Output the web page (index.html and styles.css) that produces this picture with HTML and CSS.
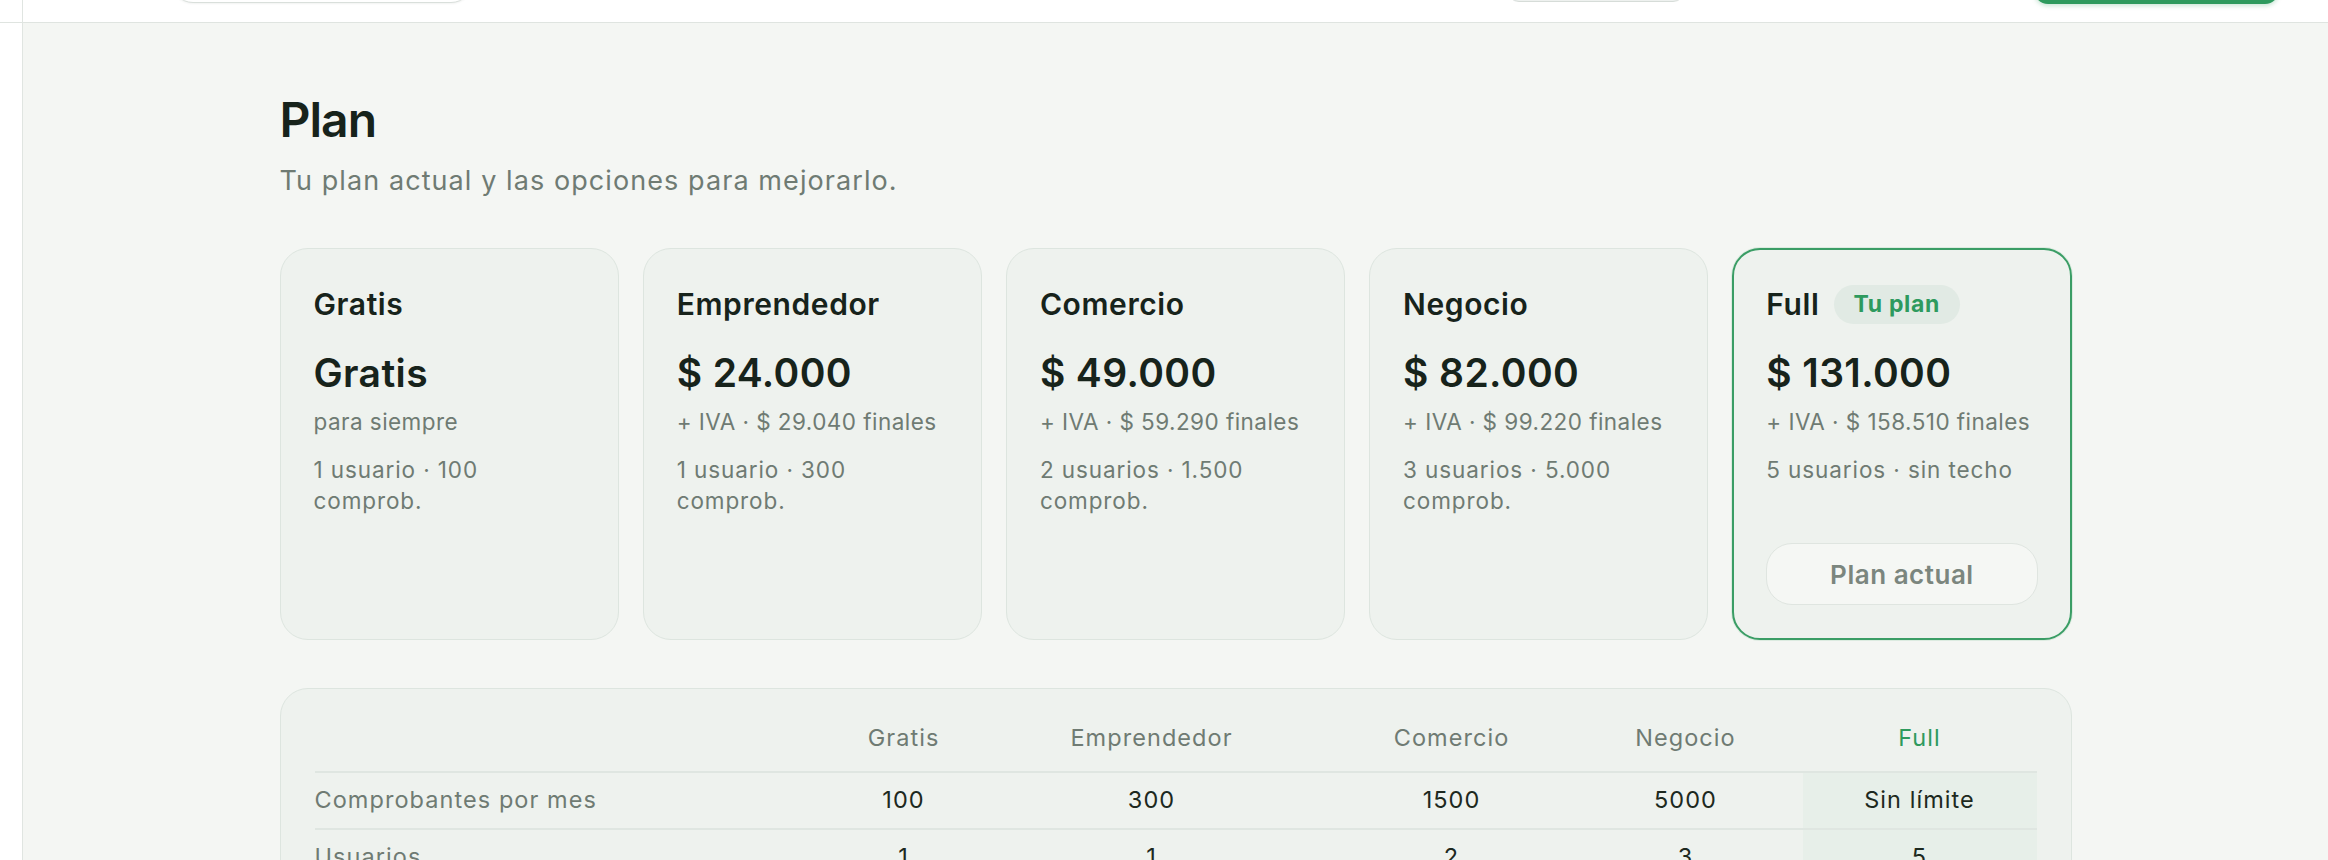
FILE: index.html
```html
<!DOCTYPE html>
<html lang="es">
<head>
<meta charset="utf-8">
<title>Plan</title>
<link rel="stylesheet" href="styles.css">
</head>
<body>
<div class="app">
  <aside class="sidebar"><div class="sidebar-top"></div></aside>
  <div class="main">
    <header class="topbar">
      <div class="search"></div>
      <div class="btn-ghost"></div>
      <div class="btn-primary"></div>
    </header>
    <main class="content">
      <div class="container">
        <h1 class="page-title">Plan</h1>
        <p class="subtitle">Tu plan actual y las opciones para mejorarlo.</p>

        <div class="plans">
          <section class="plan-card">
            <div class="plan-head"><h2 class="plan-name">Gratis</h2></div>
            <div class="plan-price">Gratis</div>
            <div class="plan-sub">para siempre</div>
            <div class="plan-feat">1 usuario · 100 comprob.</div>
          </section>
          <section class="plan-card">
            <div class="plan-head"><h2 class="plan-name">Emprendedor</h2></div>
            <div class="plan-price">$ 24.000</div>
            <div class="plan-sub">+ IVA · $ 29.040 finales</div>
            <div class="plan-feat">1 usuario · 300 comprob.</div>
          </section>
          <section class="plan-card">
            <div class="plan-head"><h2 class="plan-name">Comercio</h2></div>
            <div class="plan-price">$ 49.000</div>
            <div class="plan-sub">+ IVA · $ 59.290 finales</div>
            <div class="plan-feat">2 usuarios · 1.500 comprob.</div>
          </section>
          <section class="plan-card">
            <div class="plan-head"><h2 class="plan-name">Negocio</h2></div>
            <div class="plan-price">$ 82.000</div>
            <div class="plan-sub">+ IVA · $ 99.220 finales</div>
            <div class="plan-feat">3 usuarios · 5.000 comprob.</div>
          </section>
          <section class="plan-card is-current">
            <div class="plan-head"><h2 class="plan-name">Full</h2><span class="badge">Tu plan</span></div>
            <div class="plan-price">$ 131.000</div>
            <div class="plan-sub">+ IVA · $ 158.510 finales</div>
            <div class="plan-feat">5 usuarios · sin techo</div>
            <button class="plan-btn" type="button">Plan actual</button>
          </section>
        </div>

        <div class="compare">
          <table class="compare-table">
            <colgroup>
              <col class="c-label"><col class="c-gratis"><col class="c-empr"><col class="c-std"><col class="c-std"><col class="c-std">
            </colgroup>
            <thead>
              <tr>
                <th></th><th>Gratis</th><th>Emprendedor</th><th>Comercio</th><th>Negocio</th><th class="is-full">Full</th>
              </tr>
            </thead>
            <tbody>
              <tr>
                <td class="row-label">Comprobantes por mes</td><td>100</td><td>300</td><td>1500</td><td>5000</td><td class="is-full">Sin límite</td>
              </tr>
              <tr>
                <td class="row-label">Usuarios</td><td>1</td><td>1</td><td>2</td><td>3</td><td class="is-full">5</td>
              </tr>
            </tbody>
          </table>
        </div>
      </div>
    </main>
  </div>
</div>
</body>
</html>
```

FILE: styles.css
```css
* { box-sizing: border-box; }

html, body {
  margin: 0;
  padding: 0;
  background: #f4f6f3;
  font-family: "Inter", "Liberation Sans", sans-serif;
  color: #18241c;
  overflow: hidden;
}

.app {
  display: flex;
  min-height: 860px;
}

.sidebar {
  width: 23px;
  flex: none;
  background: #ffffff;
  border-right: 1px solid #e0e5e1;
}

.sidebar-top {
  height: 23px;
  border-bottom: 1px solid #dfe4e0;
}

.main {
  flex: 1;
  min-width: 0;
}

.topbar {
  height: 23px;
  background: #ffffff;
  border-bottom: 1px solid #dfe4e0;
  display: flex;
  align-items: flex-end;
  padding: 0 49px 19px 148px;
}

.search {
  width: 302px;
  height: 44px;
  flex: none;
  border: 1.5px solid #d9dfdb;
  border-radius: 22px;
  background: #ffffff;
  box-shadow: 0 1px 2px rgba(30, 50, 40, 0.06);
}

.btn-ghost {
  width: 178px;
  height: 44px;
  flex: none;
  margin-left: auto;
  margin-bottom: 1px;
  border: 1.5px solid #d6dcd8;
  border-radius: 12px;
  background: #eef1ef;
}

.btn-primary {
  width: 245px;
  height: 44px;
  flex: none;
  margin-left: 349px;
  margin-bottom: -1px;
  border-radius: 14px;
  background: #2e9a5e;
  box-shadow: 0 2px 4px rgba(46, 154, 94, 0.25);
}

.content {
  padding-top: 68px;
}

.container {
  width: 1792px;
  margin: 0 auto;
}

.page-title {
  margin: 0;
  font-size: 48px;
  line-height: 57.6px;
  font-weight: 600;
  letter-spacing: -0.02em;
  color: #17231b;
}

.subtitle {
  margin: 14px 0 0;
  font-size: 27px;
  line-height: 36.4px;
  color: #6f7b73;
  letter-spacing: 0.04em;
}

.plans {
  margin-top: 49px;
  display: grid;
  grid-template-columns: repeat(5, 1fr);
  gap: 24px;
}

.plan-card {
  display: flex;
  flex-direction: column;
  background: #eef2ee;
  border: 1px solid #dde5df;
  border-radius: 28px;
  padding: 36px 33px 34px;
}

.plan-card.is-current {
  border: 2px solid #3a9d65;
  padding: 35px 32px 33px;
  box-shadow: 0 0 0 1px rgba(46, 154, 94, 0.12);
}

.plan-head {
  display: flex;
  align-items: center;
  gap: 15px;
  height: 39px;
}

.plan-name {
  margin: 0;
  font-size: 30px;
  line-height: 39px;
  font-weight: 600;
  letter-spacing: 0.02em;
  color: #17231b;
}

.badge {
  height: 39px;
  padding: 0 20px 0 19px;
  border-radius: 20px;
  background: #e1eae4;
  color: #2e9a5e;
  font-size: 23px;
  font-weight: 700;
  line-height: 39px;
  letter-spacing: 0.03em;
}

.plan-price {
  margin-top: 26px;
  font-size: 39px;
  line-height: 46.8px;
  font-weight: 600;
  letter-spacing: 0.01em;
  color: #17231b;
}

.plan-sub {
  margin-top: 9px;
  font-size: 22.5px;
  line-height: 31.5px;
  color: #6f7b73;
  letter-spacing: 0.02em;
  white-space: nowrap;
}

.plan-feat {
  margin-top: 17px;
  font-size: 22.5px;
  line-height: 31px;
  color: #6f7b73;
  letter-spacing: 0.04em;
}

.plan-btn {
  margin-top: 58px;
  height: 62px;
  width: 100%;
  border: 1.5px solid #dfe5e0;
  border-radius: 26px;
  background: #f5f7f4;
  font-family: inherit;
  font-size: 26px;
  font-weight: 600;
  color: #7b867e;
  letter-spacing: 0.02em;
}

.compare {
  margin-top: 48px;
  background: #eef2ee;
  border: 1px solid #dde5df;
  border-radius: 28px;
  padding: 22px 34px 30px;
}

.compare-table {
  width: 100%;
  border-collapse: collapse;
  table-layout: fixed;
  font-size: 23.5px;
  letter-spacing: 0.045em;
}

.c-label { width: 524px; }
.c-gratis { width: 130px; }
.c-empr { width: 366px; }
.c-std { width: 234px; }

.compare-table th {
  padding: 12px 0 18px;
  line-height: 30px;
  font-weight: 400;
  color: #6f7b73;
  text-align: center;
}

.compare-table th.is-full {
  color: #2e9a5e;
}

.compare-table td {
  border-top: 2px solid #dfe6e1;
  padding: 12px 0 13px;
  line-height: 30px;
  text-align: center;
  color: #1d2920;
}

.compare-table td.row-label {
  text-align: left;
  color: #6f7b73;
}

.compare-table td.is-full {
  background: #e7efe9;
}
```
